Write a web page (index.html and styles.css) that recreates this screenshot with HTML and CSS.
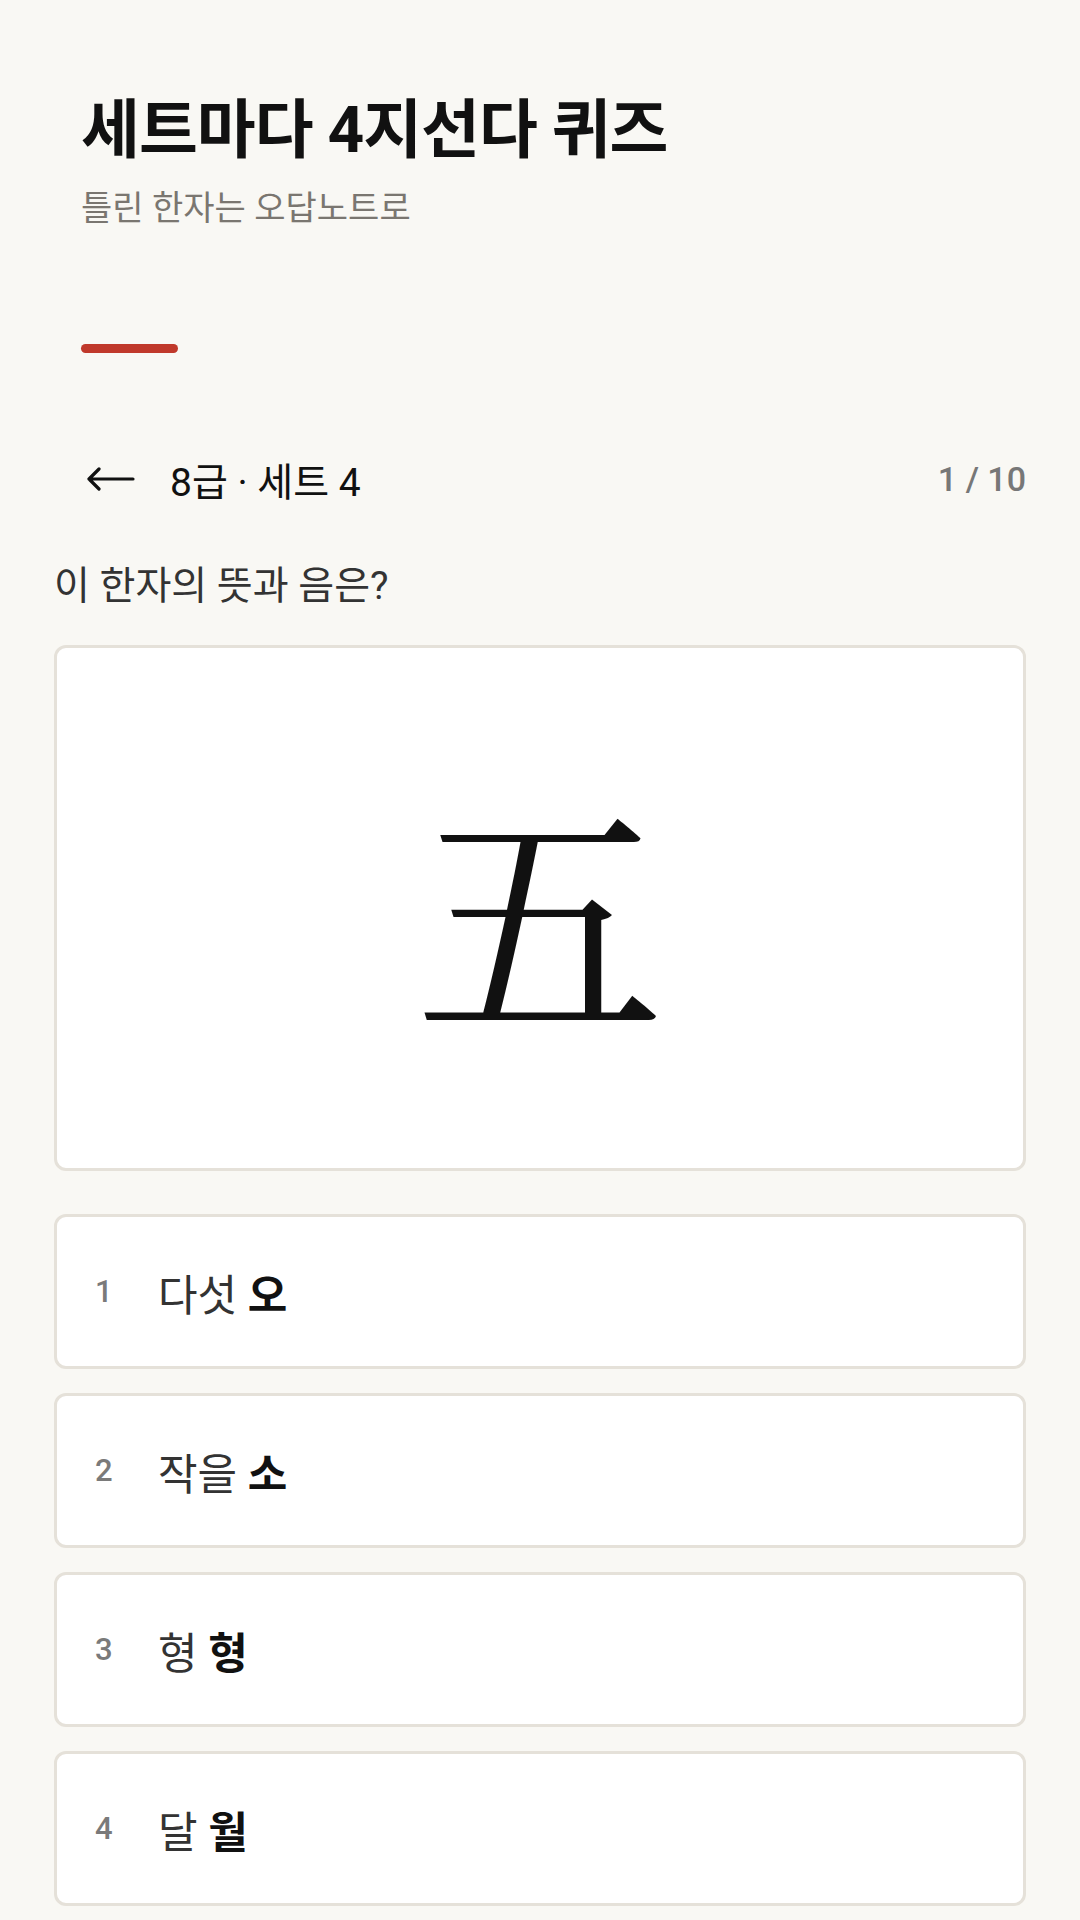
FILE: index.html
```html
<!DOCTYPE html>
<html lang="ko">
<head>
<meta charset="utf-8">
<title>세트마다 4지선다 퀴즈</title>
<link rel="stylesheet" href="styles.css">
</head>
<body>
<div class="page">
  <header class="intro">
    <h1 class="title">세트마다 4지선다 퀴즈</h1>
    <p class="subtitle">틀린 한자는 오답노트로</p>
    <div class="accent"></div>
  </header>

  <section class="quiz">
    <div class="nav">
      <div class="nav-left">
        <svg class="back" viewBox="0 0 48 24" width="48" height="24" aria-hidden="true">
          <path d="M2 12 H46 M12 2 L2 12 L12 22" fill="none" stroke="#111" stroke-width="3.2" stroke-linecap="round" stroke-linejoin="round"/>
        </svg>
        <span class="set-name">8급 · 세트 4</span>
      </div>
      <span class="progress">1 / 10</span>
    </div>

    <p class="question">이 한자의 뜻과 음은?</p>

    <div class="hanja-card">
      <span class="hanja">五</span>
    </div>

    <ol class="options">
      <li class="option"><span class="num">1</span><span class="answer">다섯 <b>오</b></span></li>
      <li class="option"><span class="num">2</span><span class="answer">작을 <b>소</b></span></li>
      <li class="option"><span class="num">3</span><span class="answer">형 <b>형</b></span></li>
      <li class="option"><span class="num">4</span><span class="answer">달 <b>월</b></span></li>
    </ol>
  </section>
</div>
</body>
</html>
```

FILE: styles.css
```css
* { box-sizing: border-box; }

html, body {
  margin: 0;
  padding: 0;
  background: #f9f8f4;
}

body {
  font-family: Roboto, "Noto Sans CJK KR", sans-serif;
  color: #111;
}

.page {
  width: 1080px;
  min-height: 1920px;
  padding: 0 54px;
}

.intro {
  padding: 91px 27px 0;
}

.title {
  margin: 0;
  font-size: 64px;
  line-height: 80px;
  font-weight: 700;
  letter-spacing: -1px;
  color: #111;
}

.subtitle {
  margin: 15px 0 0;
  font-size: 34px;
  line-height: 44px;
  color: #7a7670;
}

.accent {
  margin-top: 114px;
  width: 97px;
  height: 9px;
  border-radius: 5px;
  background: #c0392b;
}

.quiz {
  padding-top: 96px;
}

.nav {
  display: flex;
  align-items: center;
  justify-content: space-between;
  padding: 0 0 0 33px;
  height: 60px;
}

.nav-left {
  display: flex;
  align-items: center;
  gap: 35px;
}

.back { display: block; }

.set-name {
  font-size: 39px;
  font-weight: 400;
  color: #111;
}

.progress {
  font-size: 34px;
  font-weight: 500;
  color: #777;
}

.question {
  margin: 51px 0 0;
  font-size: 39px;
  line-height: 52px;
  color: #333;
}

.hanja-card {
  margin-top: 33px;
  height: 526px;
  background: #fff;
  border: 3px solid #e5e1d9;
  border-radius: 12px;
  display: flex;
  align-items: center;
  justify-content: center;
}

.hanja {
  font-family: "Noto Serif CJK KR", "Noto Serif CJK SC", serif;
  font-size: 250px;
  line-height: 1;
  color: #111;
}

.options {
  list-style: none;
  margin: 43px 0 0;
  padding: 0;
  display: flex;
  flex-direction: column;
  gap: 24px;
}

.option {
  height: 155px;
  background: #fff;
  border: 3px solid #e5e1d9;
  border-radius: 12px;
  display: flex;
  align-items: center;
  padding-left: 38px;
}

.num {
  width: 63px;
  font-size: 31px;
  font-weight: 500;
  color: #7a7a7a;
}

.answer {
  font-size: 43px;
  color: #333;
}

.answer b {
  font-weight: 700;
  color: #111;
}
```
